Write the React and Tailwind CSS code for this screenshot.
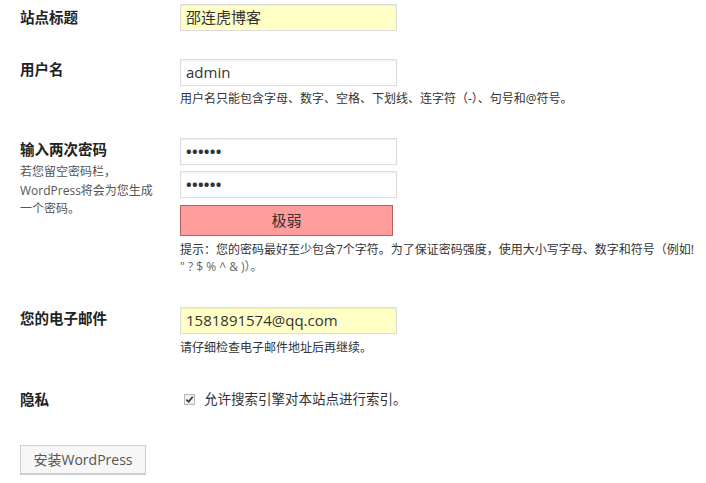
import React from "react";

const cjk = { fontFamily: '"Open Sans", "Noto Sans CJK SC", sans-serif' };

function Label({ children, className = "" }) {
    return (
        <div className={`w-[160px] shrink-0 text-[14.5px] font-bold leading-[20px] text-[#222] ${className}`}>
            {children}
        </div>
    );
}

function Field({ children, yellow, className = "" }) {
    return (
        <div
            className={`w-[217px] h-[27px] border border-[#dcdcdc] shadow-[inset_0_1px_2px_rgba(0,0,0,0.07)] px-[5px] flex items-center text-[15px] text-[#333] ${
                yellow ? "bg-[#ffffc6]" : "bg-white"
            } ${className}`}>
            {children}
        </div>
    );
}

function Help({ children, className = "" }) {
    return <div className={`text-[12px] leading-[18px] text-[#333] ${className}`}>{children}</div>;
}

export default function App() {
    return (
        <div className="w-[706px] h-[483px] bg-white overflow-hidden pl-5 pt-[4px]" style={cjk}>
            {/* site title */}
            <div className="flex">
                <Label className="pt-[4px]">站点标题</Label>
                <Field yellow>邵连虎博客</Field>
            </div>

            {/* username */}
            <div className="flex mt-[28px]">
                <Label className="pt-[1px]">用户名</Label>
                <div>
                    <Field>admin</Field>
                    <Help className="mt-[4px]">用户名只能包含字母、数字、空格、下划线、连字符（-）、句号和@符号。</Help>
                </div>
            </div>

            {/* password */}
            <div className="flex mt-[30px]">
                <div className="w-[160px] shrink-0 pt-[2px]">
                    <div className="text-[14.5px] font-bold leading-[20px] text-[#222]">输入两次密码</div>
                    <div className="mt-[3px] text-[12px] leading-[18.5px] text-[#555]">
                        若您留空密码栏，
                        <br />
                        WordPress将会为您生成
                        <br />
                        一个密码。
                    </div>
                </div>
                <div>
                    <Field className="text-[12px] font-bold tracking-[0.3px] text-[#111]">••••••</Field>
                    <Field className="mt-[6px] text-[12px] font-bold tracking-[0.3px] text-[#111]">••••••</Field>
                    <div className="mt-[7px] w-[213px] h-[31px] bg-[#ff9d9d] border border-[#b06060] flex items-center justify-center text-[15px] text-[#333]">
                        极弱
                    </div>
                    <div className="mt-[5px] w-[520px] text-[12px] leading-[17px] text-[#333]">
                        提示：您的密码最好至少包含7个字符。为了保证密码强度，使用大小写字母、数字和符号（例如!
                        <br />
                        <span className="text-[#666]">" ? $ % ^ &amp; )）。</span>
                    </div>
                </div>
            </div>

            {/* email */}
            <div className="flex mt-[32px]">
                <Label className="pt-[2px]">您的电子邮件</Label>
                <div>
                    <Field yellow className="text-[15.5px]">1581891574@qq.com</Field>
                    <Help className="mt-[5px]">请仔细检查电子邮件地址后再继续。</Help>
                </div>
            </div>

            {/* privacy */}
            <div className="flex mt-[32px] h-[20px]">
                <Label className="pt-[1px]">隐私</Label>
                <div className="flex items-center gap-[9px] pl-[4px]">
                    <span className="w-[11px] h-[11px] border border-[#b4b9be] bg-[#f1f1f1] flex items-center justify-center">
                        <svg viewBox="0 0 10 10" className="w-[9px] h-[9px]">
                            <path d="M1.5 5.2 L4 7.6 L8.6 2" fill="none" stroke="#333" strokeWidth="1.8" />
                        </svg>
                    </span>
                    <span className="text-[13.5px] text-[#333]">允许搜索引擎对本站点进行索引。</span>
                </div>
            </div>

            {/* submit */}
            <button className="mt-[36px] w-[126px] h-[29px] border border-[#ccc] bg-[#f7f7f7] shadow-[0_1px_0_#ccc] text-[14px] text-[#555] flex items-center justify-center">
                安装WordPress
            </button>
        </div>
    );
}
